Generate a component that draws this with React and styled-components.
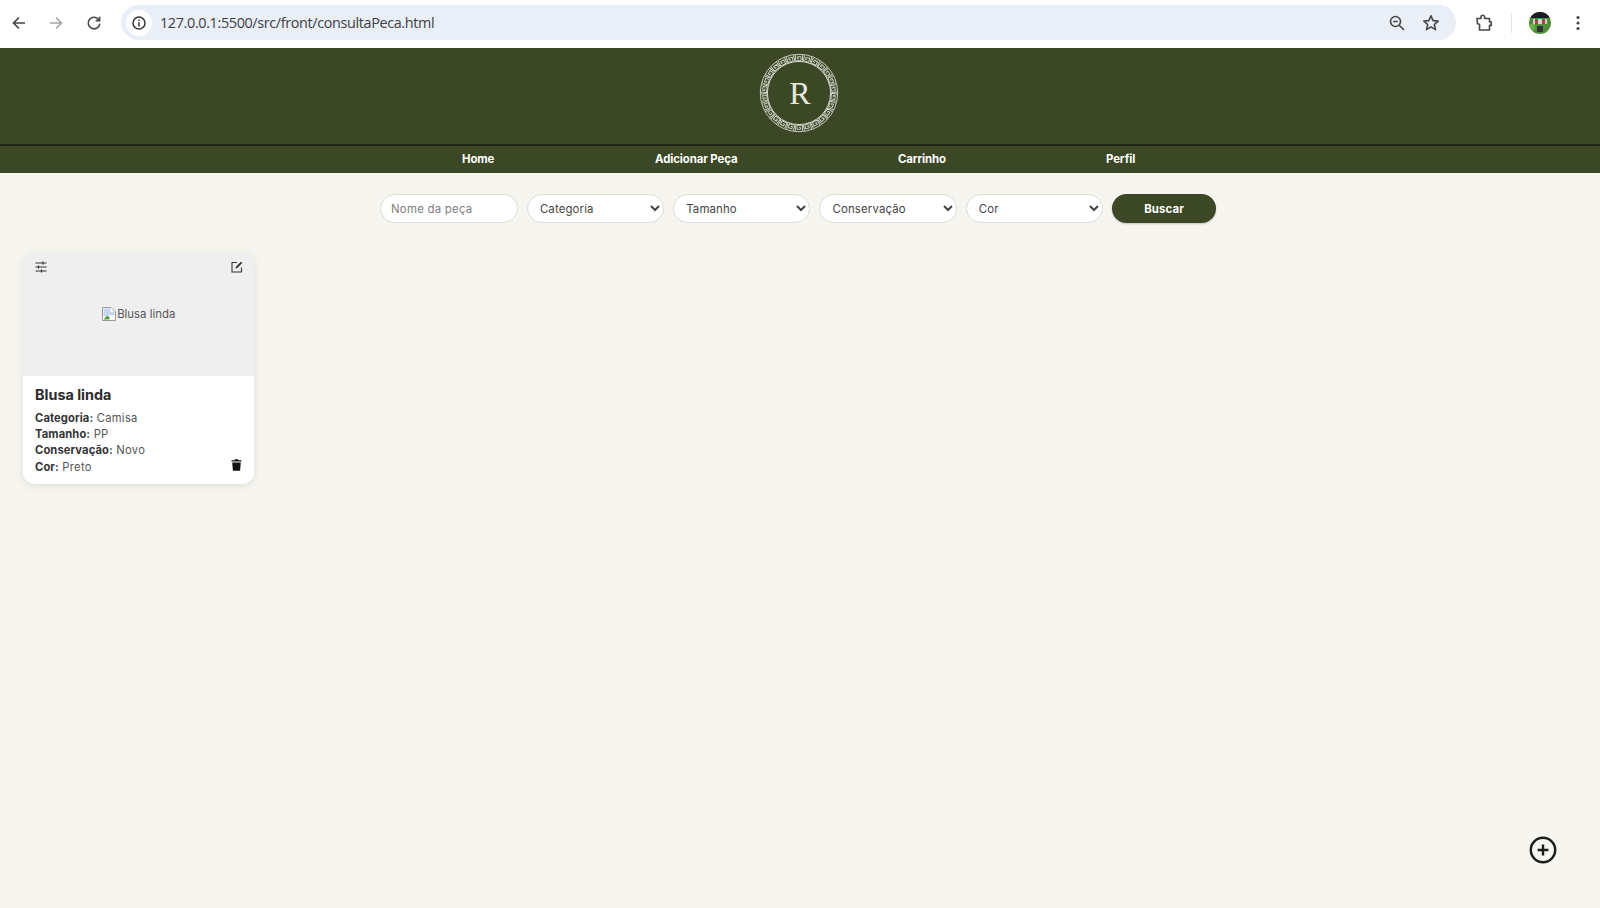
import React from 'react';
import styled, { createGlobalStyle } from 'styled-components';

const Global = createGlobalStyle`
  html, body { margin: 0; padding: 0; height: 100%; background: #f6f5f0; }
  * { box-sizing: border-box; }
`;
const FONT = `Inter, "Open Sans", "Liberation Sans", sans-serif`;

const Page = styled.div`
  width: 1600px; height: 908px; position: relative; overflow: hidden;
  background: #f6f5f0; font-family: ${FONT}; display: flex; flex-direction: column;
`;
const Chrome = styled.div`
  height: 48px; background: #fff; display: flex; align-items: center; padding: 0 0 3px 0; flex: none;
`;
const NavIcon = styled.div`
  width: 20px; height: 20px; margin-left: ${p => p.$ml}px; display: flex; align-items: center; justify-content: center;
  flex: none; color: ${p => p.$c || '#474747'};
`;
const Omnibox = styled.div`
  margin-left: 17px; width: 1335px; height: 35px; background: #e9eef7; border-radius: 18px;
  display: flex; align-items: center; padding: 0 15px 0 5px; flex: none;
`;
const InfoChip = styled.div`
  width: 26px; height: 26px; border-radius: 50%; background: #fff; display: flex; align-items: center; justify-content: center; flex: none;
`;
const Url = styled.div`
  margin-left: 8px; flex: 1; font: 400 14.4px "Open Sans", sans-serif; color: #3c4043; letter-spacing: -0.36px; white-space: nowrap;
`;
const OmniIcons = styled.div`
  display: flex; align-items: center; gap: 14px; color: #474747;
`;
const Divider = styled.div`
  width: 1px; height: 20px; background: #dfe3ee; margin-left: 17px; flex: none;
`;
const Avatar = styled.div`
  width: 22px; height: 22px; margin-left: 17px; border-radius: 50%; overflow: hidden; flex: none; display: flex;
`;
const Header = styled.header`
  height: 97px; background: #3b4725; display: flex; justify-content: center; align-items: flex-start; padding-top: 5px; flex: none;
  border-bottom: 1px solid #1f2612;
`;
const Logo = styled.svg`
  width: 80px; height: 80px; display: block; transform: translateX(-1px);
`;
const Nav = styled.nav`
  height: 28px; background: #3b4725; flex: none; position: relative; display: flex; align-items: center; padding: 0 0 1px 462px;
  border-top: 1px solid #1f2612;
`;
const NavLink = styled.a`
  font: 700 11.4px ${FONT}; color: #fff; text-decoration: none; white-space: nowrap; width: ${p => p.$w}px; flex: none; letter-spacing: -0.1px;
`;
const Filters = styled.div`
  display: flex; gap: 9px; margin: 21px 0 0 380px; height: 29px; flex: none;
`;
const Input = styled.input`
  width: 137.9px; height: 29px; border: 1px solid #dcdcd8; border-radius: 14.5px; background: #fff; padding: 0 10px;
  font: 400 11.4px ${FONT}; color: #444; outline: none; letter-spacing: 0.25px;
  &::placeholder { color: #808080; opacity: 1; }
`;
const Select = styled.select`
  width: 137.3px; height: 29px; border: 1px solid #dcdcd8; border-radius: 14.5px; background: #fff; padding: 0 8px;
  font: 400 11.4px ${FONT}; color: #444; outline: none; letter-spacing: 0.15px;
`;
const Button = styled.button`
  width: 104px; height: 29px; border: none; border-radius: 14.5px; background: #3b4725; color: #fff;
  font: 700 11.4px ${FONT}; letter-spacing: 0.1px; box-shadow: 0 1px 2px rgba(0,0,0,.2);
`;
const Grid = styled.main`
  padding: 29px 0 0 23px; flex: 1;
`;
const Card = styled.article`
  width: 230.5px; height: 232px; border-radius: 12px; background: #fff; box-shadow: 0 2px 8px rgba(0,0,0,.09); overflow: hidden; display: flex; flex-direction: column;
`;
const Media = styled.div`
  height: 124px; background: #efefef; position: relative; flex: none; display: flex; align-items: center; justify-content: center;
`;
const Alt = styled.div`
  display: flex; align-items: center; font: 400 11.4px ${FONT}; color: #555; letter-spacing: 0;
`;
const MediaIcon = styled.div`
  position: absolute; top: 3px; ${p => p.$side}: ${p => p.$side === 'left' ? 6 : 5}px; width: 24px; height: 24px; display: flex; align-items: center; justify-content: center; color: #333;
`;
const Body = styled.div`
  padding: 10px 12px 0; position: relative; flex: 1;
`;
const Title = styled.h3`
  margin: 0 0 7px; font: 700 14.4px/17px ${FONT}; color: #2b2b2b;
`;
const Row = styled.p`
  margin: 0; font: 400 11.2px/16.2px ${FONT}; color: #555; letter-spacing: 0.3px;
  b { font-weight: 700; color: #333; letter-spacing: 0.1px; }
`;
const Trash = styled.div`
  position: absolute; right: 10px; bottom: 12px; width: 14px; height: 14px; display: flex; align-items: center; justify-content: center;
`;
const Fab = styled.div`
  position: absolute; left: 1528px; top: 835px; width: 30px; height: 30px;
`;

const meander = 'M0 0V5.6H5.6V1.6H2V3.6H3.6M7.2 5.6V0';

function App() {
  const n = 26;
  return (
    <Page>
      <Global />
      <Chrome>
        <NavIcon $ml={9}>
          <svg width="16" height="16" viewBox="0 0 16 16" fill="none" stroke="currentColor" strokeWidth="1.7"><path d="M14 8H2.5M8 2.5L2.5 8L8 13.5" /></svg>
        </NavIcon>
        <NavIcon $ml={17} $c="#a3a3a3">
          <svg width="16" height="16" viewBox="0 0 16 16" fill="none" stroke="currentColor" strokeWidth="1.5"><path d="M2 8H13.5M8 2.5L13.5 8L8 13.5" /></svg>
        </NavIcon>
        <NavIcon $ml={18}>
          <svg width="16" height="16" viewBox="0 0 16 16" fill="none" stroke="currentColor" strokeWidth="1.6"><path d="M13 5A5.8 5.8 0 1 0 13.8 8.6" /><path d="M13.6 1.8V5.6H9.8" /></svg>
        </NavIcon>
        <Omnibox>
          <InfoChip>
            <svg width="16" height="16" viewBox="0 0 16 16" fill="none" stroke="#333" strokeWidth="1.5"><circle cx="8" cy="8" r="6" /><path d="M8 7.2V11.4M8 4.6V6" /></svg>
          </InfoChip>
          <Url>127.0.0.1:5500/src/front/consultaPeca.html</Url>
          <OmniIcons>
            <svg width="20" height="20" viewBox="0 0 20 20" fill="none" stroke="currentColor" strokeWidth="1.6"><circle cx="8.5" cy="8.5" r="5" /><path d="M12.2 12.2L17 17M6.2 8.5H10.8" /></svg>
            <svg width="20" height="20" viewBox="0 0 20 20" fill="none" stroke="currentColor" strokeWidth="1.6" strokeLinejoin="round"><path d="M10 2.8L12.1 7.6L17.2 8.1L13.3 11.5L14.5 16.6L10 13.9L5.5 16.6L6.7 11.5L2.8 8.1L7.9 7.6Z" /></svg>
          </OmniIcons>
        </Omnibox>
        <NavIcon $ml={18}>
          <svg width="20" height="20" viewBox="0 0 20 20" fill="none" stroke="currentColor" strokeWidth="1.6" strokeLinejoin="round"><path d="M3 5.5H7V4A1.8 1.8 0 0 1 10.6 4V5.5H15.5V9H17.3V12.4H15.5V17H5.5V13.6A1.9 1.9 0 0 0 3.5 10.8Z" /></svg>
        </NavIcon>
        <Divider />
        <Avatar>
          <svg width="22" height="22" viewBox="0 0 22 22"><rect width="22" height="22" fill="#4f8f3a" /><rect width="22" height="6" fill="#1c1c22" /><rect x="4" y="7" width="14" height="5" fill="#d8d0d0" /><rect x="6" y="7" width="3" height="5" fill="#a04545" /><rect x="13" y="7" width="3" height="5" fill="#a04545" /><rect x="8" y="14" width="6" height="6" fill="#30343a" /><rect x="0" y="12" width="6" height="6" fill="#6ab04a" /></svg>
        </Avatar>
        <NavIcon $ml={17}>
          <svg width="4" height="16" viewBox="0 0 4 16" fill="currentColor"><circle cx="2" cy="2.5" r="1.6" /><circle cx="2" cy="8" r="1.6" /><circle cx="2" cy="13.5" r="1.6" /></svg>
        </NavIcon>
      </Chrome>
      <Header>
        <Logo viewBox="0 0 80 80" aria-label="Logo">
          <circle cx="40" cy="40" r="38.7" fill="none" stroke="#d9dbd2" strokeWidth="0.9" />
          <circle cx="40" cy="40" r="31.6" fill="none" stroke="#d9dbd2" strokeWidth="1" />
          {Array.from({ length: n }).map((_, i) => (
            <path key={i} d={meander} fill="none" stroke="#d4d6cc" strokeWidth="0.95"
              transform={`rotate(${(i * 360) / n} 40 40) translate(36.4 2.1)`} />
          ))}
          <text x="41" y="51" textAnchor="middle" fontFamily='"Liberation Serif", serif' fontSize="32" fill="#e8e9de">R</text>
        </Logo>
      </Header>
      <Nav>
        <NavLink $w={193} href="#">Home</NavLink>
        <NavLink $w={243} href="#">Adicionar Peça</NavLink>
        <NavLink $w={208} href="#">Carrinho</NavLink>
        <NavLink $w={60} href="#">Perfil</NavLink>
      </Nav>
      <Filters>
        <Input placeholder="Nome da peça" />
        <Select><option>Categoria</option></Select>
        <Select><option>Tamanho</option></Select>
        <Select><option>Conservação</option></Select>
        <Select><option>Cor</option></Select>
        <Button>Buscar</Button>
      </Filters>
      <Grid>
        <Card>
          <Media>
            <MediaIcon $side="left">
              <svg width="14" height="14" viewBox="0 0 14 14" fill="none" stroke="currentColor" strokeWidth="1.2"><path d="M1.5 3H12.5M1.5 7H12.5M1.5 11H12.5" /><path d="M9 1.5V4.5M4.5 5.5V8.5M7.5 9.5V12.5" /></svg>
            </MediaIcon>
            <Alt>
              <svg width="16" height="16" viewBox="0 0 16 16" style={{ flex: 'none' }}><path d="M1.5 1.5H10L14.5 6V14.5H1.5Z" fill="#fff" stroke="#9a9a9a" /><path d="M2.5 2.5H9.5V6H13.5V9L2.5 10Z" fill="#c4d5f2" /><path d="M2.5 13.5L6 9.5L9 11.5L8 13.5Z" fill="#4da045" /></svg>
              Blusa linda
            </Alt>
            <MediaIcon $side="right">
              <svg width="14" height="14" viewBox="0 0 14 14" fill="none"><path d="M7 2.5H2V12H11.5V7.5" stroke="currentColor" strokeWidth="1.1" /><path d="M5.6 8.4L5.9 6.7L10.9 1.7L12.3 3.1L7.3 8.1Z" fill="currentColor" /></svg>
            </MediaIcon>
          </Media>
          <Body>
            <Title>Blusa linda</Title>
            <Row><b>Categoria:</b> Camisa</Row>
            <Row><b>Tamanho:</b> PP</Row>
            <Row><b>Conservação:</b> Novo</Row>
            <Row><b>Cor:</b> Preto</Row>
            <Trash>
              <svg width="11" height="12" viewBox="0 0 11 12" fill="#111"><path d="M0.5 1.2H3.5L4 0.3H7L7.5 1.2H10.5V2.6H0.5ZM1.2 3.4H9.8L9.1 11.7H1.9Z" /></svg>
            </Trash>
          </Body>
        </Card>
      </Grid>
      <Fab>
        <svg width="30" height="30" viewBox="0 0 30 30" fill="none" stroke="#1c1c1c"><circle cx="15" cy="15" r="12.2" strokeWidth="2.4" /><path d="M15 9.6V20.4M9.6 15H20.4" strokeWidth="2.4" /></svg>
      </Fab>
    </Page>
  );
}
export default App;
